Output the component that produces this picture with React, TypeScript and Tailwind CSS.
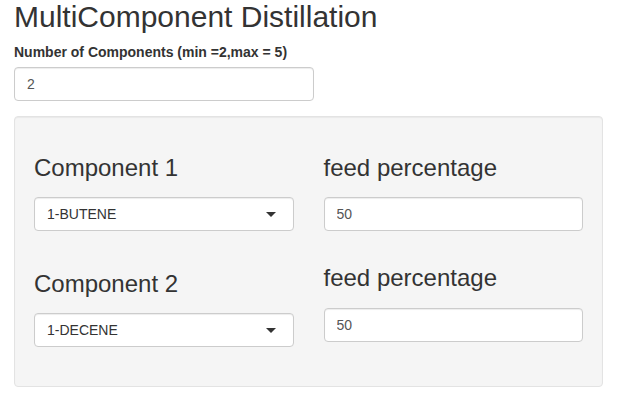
import React from "react";

function Select({ value }: { value: string }) {
  return (
    <div className="flex h-[34px] items-center justify-between rounded-[4px] border border-[#cccccc] bg-white pl-[12px] pr-[17px] text-[14px] text-[#333333] shadow-[inset_0_1px_1px_rgba(0,0,0,0.075)]">
      <span>{value}</span>
      <span className="h-0 w-0 border-x-[5px] border-t-[5px] border-x-transparent border-t-[#333333]" />
    </div>
  );
}

function NumInput({ value }: { value: string }) {
  return (
    <input
      type="text"
      defaultValue={value}
      className="h-[34px] w-full rounded-[4px] border border-[#cccccc] bg-white px-[12px] text-[14px] text-[#555555] shadow-[inset_0_1px_1px_rgba(0,0,0,0.075)] outline-none"
    />
  );
}

export default function App() {
  return (
    <div
      className="min-h-[401px] bg-white px-[14px] text-[#333333]"
      style={{ fontFamily: '"Liberation Sans", Arial, sans-serif' }}
    >
      <h2 className="mb-[9px] text-[30px] font-normal leading-[33px]">
        MultiComponent Distillation
      </h2>
      <label className="mb-[5px] block text-[14px] font-bold leading-[20px]">
        Number of Components (min =2,max = 5)
      </label>
      <div className="mb-[15px] w-[300px]">
        <NumInput value="2" />
      </div>
      <div className="rounded-[4px] border border-[#e3e3e3] bg-[#f5f5f5] p-[19px] shadow-[inset_0_1px_1px_rgba(0,0,0,0.05)]">
        <div className="grid grid-cols-2 gap-x-[30px]">
          <div className="flex flex-col">
            <h3 className="mb-[16px] mt-[19px] text-[24px] font-normal leading-[26px]">
              Component 1
            </h3>
            <Select value="1-BUTENE" />
            <h3 className="mb-[16px] mt-[40px] text-[24px] font-normal leading-[26px]">
              Component 2
            </h3>
            <div className="mb-[20px]">
              <Select value="1-DECENE" />
            </div>
          </div>
          <div className="flex flex-col">
            <h3 className="mb-[16px] mt-[19px] text-[24px] font-normal leading-[26px]">
              feed percentage
            </h3>
            <NumInput value="50" />
            <h3 className="mb-[17px] mt-[34px] text-[24px] font-normal leading-[26px]">
              feed percentage
            </h3>
            <NumInput value="50" />
          </div>
        </div>
      </div>
    </div>
  );
}
